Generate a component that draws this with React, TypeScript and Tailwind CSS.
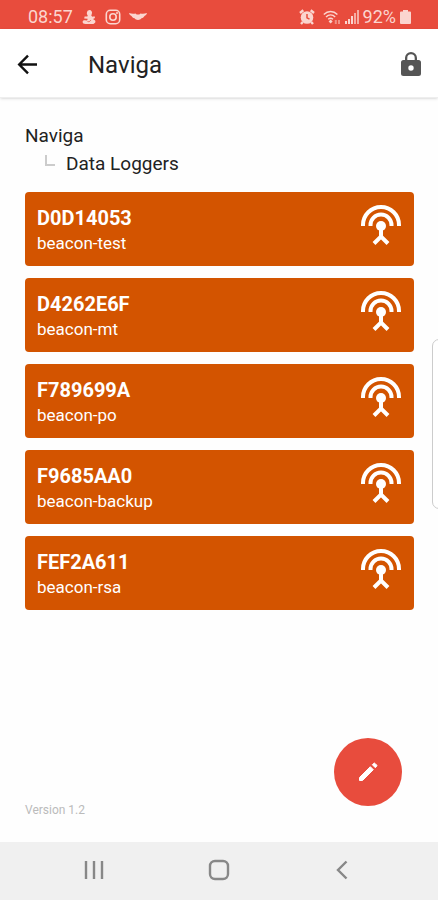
import type { ReactNode } from 'react';

type Beacon = {
  id: string;
  name: string;
};

const beacons: Beacon[] = [
  { id: 'D0D14053', name: 'beacon-test' },
  { id: 'D4262E6F', name: 'beacon-mt' },
  { id: 'F789699A', name: 'beacon-po' },
  { id: 'F9685AA0', name: 'beacon-backup' },
  { id: 'FEF2A611', name: 'beacon-rsa' },
];

function StatusBar() {
  return (
    <div className="flex h-[29px] items-center justify-between bg-[#e84c3d] pt-1 pr-[27px] pl-7 text-lg leading-6 text-[#fbd5cf]">
      <div className="flex items-center gap-2">
        <span>08:57</span>
        <svg className="size-4" viewBox="0 0 16 16" fill="currentColor" aria-hidden="true">
          <path d="M8.500 1a2.600 2.600 0 0 1 2.400 3.500L10.300 6.800l1.200 1 2-.5.5 1.600-2 1.200 1.800 1.200c.7.600.8 1.500.4 2.200-.5.9-1.500 1.500-2.600 1.500H4.500c-1.700 0-2.900-.8-2.900-2 0-1.200.9-1.800 2.200-1.700l2.200.2c.4-.5.6-1.100.6-1.700L3.200 9.400l.4-1.900 2.800.1.300-1.200A2.900 2.900 0 0 1 5.900 3.500 2.600 2.600 0 0 1 8.500 1Z" />
          <path d="M6.500 12.500c1.300.4 2.600 0 3.300-1.300" fill="none" stroke="#e84c3d" strokeWidth="0.800" />
        </svg>
        <svg className="size-4" viewBox="0 0 16 16" fill="none" stroke="currentColor" strokeWidth="1.600" aria-hidden="true">
          <rect x="1.300" y="1.300" width="13.400" height="13.400" rx="4" />
          <circle cx="8" cy="8" r="3.200" />
          <circle cx="12" cy="4" r="1" fill="currentColor" stroke="none" />
        </svg>
        <svg className="h-4 w-[18px]" viewBox="0 0 18 16" fill="currentColor" aria-hidden="true">
          <path d="M0 4c2.500.9 4.500.9 6.500.5l1.200 1h2.600l1.200-1c2 .4 4 .4 6.500-.5-.5 1.700-1.500 2.600-2.500 3-.6 1.200-1.600 2-3 2.300-.8 1-2 1.700-3.500 1.700s-2.700-.7-3.500-1.700c-1.400-.3-2.400-1.100-3-2.300C1.500 6.600.5 5.700 0 4Z" />
        </svg>
      </div>
      <div className="flex items-center gap-1">
        <svg className="size-4" viewBox="0 0 16 16" fill="none" stroke="currentColor" aria-hidden="true">
          <circle cx="8" cy="8.500" r="6.300" fill="currentColor" stroke="none" />
          <path d="M1 4 4.300 1.300M15 4l-3.300-2.700M3.800 13l-1.800 2M12.200 13l1.800 2" strokeWidth="2.400" />
          <path d="M8 5v3.800l2.500 1.400" stroke="#e84c3d" strokeWidth="1.500" />
        </svg>
        <svg className="ml-1 h-4 w-[18px]" viewBox="0 0 18 16" fill="none" stroke="currentColor" strokeWidth="1.400" aria-hidden="true">
          <path d="M.8 5.500C4.800 1.500 10.400 1.500 14.400 5.500M3 8c2.700-2.600 6.500-2.600 9.200 0M5.200 10.300c1.500-1.300 3.300-1.300 4.800 0" />
          <path d="m7.600 10.500 2 2-2 2-2-2Z" fill="currentColor" stroke="none" />
          <path d="M12.800 11v4M16 11v4" opacity="0.500" strokeWidth="2" />
        </svg>
        <svg className="h-4 w-[14px]" viewBox="0 0 14 16" fill="currentColor" aria-hidden="true">
          <path d="M0 12h2v3H0ZM3 10h2v5H3ZM6 7h2v8H6Z" />
          <path d="M9 4h2v11H9ZM12 1h2v14h-2Z" opacity="0.700" />
        </svg>
        <span>92%</span>
        <svg className="h-4 w-[11px]" viewBox="0 0 11 16" fill="currentColor" aria-hidden="true">
          <path d="M3 1h5v1.500h2a1 1 0 0 1 1 1V14a1 1 0 0 1-1 1H1a1 1 0 0 1-1-1V3.500a1 1 0 0 1 1-1h2Z" />
        </svg>
      </div>
    </div>
  );
}

function BeaconIcon() {
  return (
    <svg
      className="h-[42px] w-[42px] shrink-0"
      viewBox="0 0 42 42"
      fill="none"
      stroke="currentColor"
      strokeWidth="4"
      aria-hidden="true"
    >
      <path d="M3 22V21a18 18 0 0 1 36 0V22" />
      <path d="M10.500 22V21a10.500 10.500 0 0 1 21 0V22" />
      <circle cx="21" cy="22" r="5" fill="currentColor" stroke="none" />
      <path d="M21 23v10M14 39.500l7-7 7 7" />
    </svg>
  );
}

function NavButton({ label, children }: { label: string; children: ReactNode }) {
  return (
    <button type="button" aria-label={label} className="flex flex-1 items-center justify-center cursor-pointer">
      <svg className="size-6" viewBox="0 0 24 24" fill="none" stroke="currentColor" strokeWidth="2.400" aria-hidden="true">
        {children}
      </svg>
    </button>
  );
}

export default function App() {
  return (
    <div className="relative flex min-h-screen flex-col overflow-hidden bg-[#fefefe] font-[Roboto,sans-serif] text-[#222]">
      <StatusBar />

      <header className="flex h-[69px] items-center border-b border-[#eee] bg-white px-4 pt-1 shadow-sm">
        <button type="button" aria-label="Back" className="cursor-pointer text-[#111]">
          <svg className="size-6" viewBox="0 0 24 24" fill="none" stroke="currentColor" strokeWidth="2.400" aria-hidden="true">
            <path d="M21 11.500H4M12 2.700 3.200 11.500l8.800 8.800" />
          </svg>
        </button>
        <h1 className="ml-12 flex-1 text-2xl">Naviga</h1>
        <button type="button" aria-label="Lock" className="cursor-pointer text-[#555]">
          <svg className="h-7 w-[22px]" viewBox="0 0 22 28" fill="currentColor" aria-hidden="true">
            <path
              fillRule="evenodd"
              d="M5 9V7a6 6 0 0 1 12 0v2h1.500A2.500 2.500 0 0 1 21 11.500v11a2.500 2.500 0 0 1-2.500 2.500h-15A2.500 2.500 0 0 1 1 22.500v-11A2.500 2.500 0 0 1 3.500 9Zm2.300 0h7.400V7a3.700 3.700 0 0 0-7.400 0ZM11 14.300a2.700 2.700 0 1 0 0 5.400 2.700 2.700 0 0 0 0-5.400Z"
            />
          </svg>
        </button>
      </header>

      <main className="flex flex-1 flex-col px-6 pt-6">
        <div className="pl-px text-[19px] leading-7">
          <p>Naviga</p>
          <div className="flex items-center">
            <span className="mr-[11px] mb-2 ml-5 h-[11px] w-[10px] border-b-2 border-l-2 border-[#ccc]" />
            <h2>Data Loggers</h2>
          </div>
        </div>

        <ul className="mt-[14px] space-y-3 pl-px">
          {beacons.map(b => (
            <li key={b.id}>
              <button
                type="button"
                className="flex h-[74px] w-full items-start justify-between rounded bg-[#d35400] px-3 pt-3 text-left text-white cursor-pointer"
              >
                <span className="flex flex-col pt-[2px]">
                  <span className="text-xl leading-6 font-bold">{b.id}</span>
                  <span className="text-[17px] leading-[26px]">{b.name}</span>
                </span>
                <BeaconIcon />
              </button>
            </li>
          ))}
        </ul>

        <div className="mt-auto flex items-end justify-between pt-6 pb-6 pl-px">
          <p className="text-xs leading-4 text-[#bbb]">Version 1.2</p>
          <button
            type="button"
            aria-label="Edit"
            className="mr-3 mb-3 flex size-[68px] items-center justify-center rounded-full bg-[#e84c3d] text-white cursor-pointer"
          >
            <svg className="size-6" viewBox="0 0 24 24" fill="currentColor" stroke="currentColor" strokeLinejoin="round" aria-hidden="true">
              <path d="M3.500 17.500 14.300 6.700 17.300 9.700 6.500 20.500H3.500Z" />
              <path d="m16.300 4.700 1.300-1.300a1 1 0 0 1 1.400 0l1.600 1.600a1 1 0 0 1 0 1.400l-1.300 1.300Z" />
            </svg>
          </button>
        </div>
      </main>

      {/* edge panel handle */}
      <div className="absolute top-[339px] -right-2 h-[170px] w-[14px] rounded-lg border border-[#ccc] bg-white" />

      <nav className="flex h-[58px] bg-[#f0f0f0] pr-8 pb-[2px] pl-8 text-[#888]">
        <NavButton label="Recent apps">
          <path d="M4 3v18M12 3v18M20 3v18" />
        </NavButton>
        <NavButton label="Home">
          <rect x="3" y="3" width="18" height="18" rx="5" />
        </NavButton>
        <NavButton label="Back">
          <path d="M14.500 3.500 6 12l8.500 8.500" />
        </NavButton>
      </nav>
    </div>
  );
}
